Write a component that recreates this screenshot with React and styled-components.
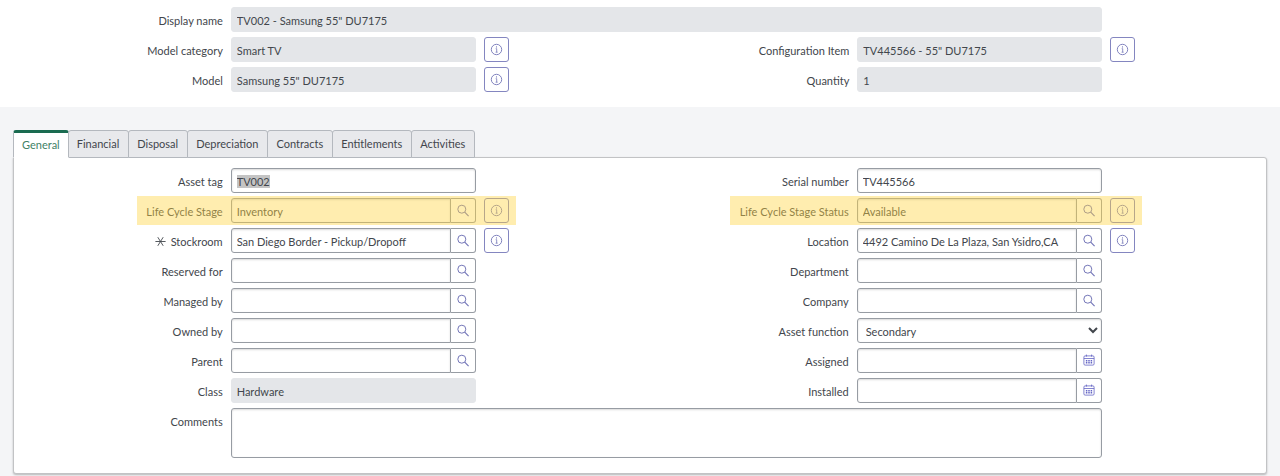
import React, { useEffect, useRef, useState } from "react";
import styled, { createGlobalStyle } from "styled-components";

const GlobalStyle = createGlobalStyle`
  * {
    box-sizing: border-box;
  }

  body {
    margin: 0;
    background: #f4f5f7;
    color: #42464c;
    font-family: Lato, "Open Sans", sans-serif;
    font-size: 11px;
    line-height: 16px;
  }

  button,
  input,
  select,
  textarea {
    margin: 0;
    font: inherit;
    color: inherit;
  }
`;

const Header = styled.header`
  padding: 7px 13px 10px 14px;
  background: #fff;
`;

const Main = styled.main`
  padding: 23px 13px 2px;
`;

const TabList = styled.div`
  display: flex;
`;

const Tab = styled.button`
  height: 28px;
  margin-bottom: -1px;
  margin-right: -1px;
  padding: ${({ $active }) => ($active ? "0 8px" : "0 9px 0 8px")};
  border: 1px solid #b4b8be;
  border-radius: 3px 3px 0 0;
  background: #e8e9ec;
  white-space: nowrap;
  cursor: pointer;
  ${({ $active }) =>
    $active &&
    `
      position: relative;
      border-top: 3px solid #1a6b50;
      border-bottom-color: #fff;
      background: #fff;
      color: #3f8266;
    `};
`;

const Panel = styled.section`
  padding: 10px 0 10px;
  border: 1px solid #c2c3c5;
  border-radius: 0 3px 3px 3px;
  background: #fff;
  box-shadow: 0 1px 2px rgba(0, 0, 0, 0.25);
`;

const Columns = styled.div`
  display: grid;
  grid-template-columns: 1fr 1fr;
`;

const Column = styled.div`
  display: flex;
  flex-direction: column;
`;

const Row = styled.div`
  position: relative;
  display: grid;
  grid-template-columns: ${({ $wide }) => ($wide ? "4fr 17fr 3fr" : "4fr 5fr 3fr")};
  min-height: 25px;
  margin-bottom: 5px;
`;

// translucent marker laid over the whole row
const Marker = styled.span`
  position: absolute;
  top: -2px;
  bottom: -2px;
  left: ${({ $start }) => $start}px;
  right: 124px;
  background: rgba(255, 212, 64, 0.42);
  pointer-events: none;
`;

const Label = styled.label`
  display: flex;
  justify-content: flex-end;
  align-items: center;
  gap: 5px;
  height: 25px;
  padding-top: 2px;
  white-space: nowrap;
`;

const FieldBox = styled.div`
  display: flex;
  min-width: 0;
  padding: 0 8px;
`;

const TextInput = styled.input`
  flex: 1;
  min-width: 0;
  height: 25px;
  padding: 2px 5px 0;
  border: 1px solid #979ca3;
  border-radius: ${({ $addon }) => ($addon ? "3px 0 0 3px" : "3px")};
  outline: none;
  background: #fff;
  box-shadow: inset 0 1px 2px rgba(0, 0, 0, 0.15);

  &::selection {
    background: #c4c4c4;
    color: #42464c;
  }

  &:read-only {
    border-color: #e4e6e9;
    background: #e4e6e9;
    box-shadow: none;
  }
`;

const Select = styled.select`
  flex: 1;
  min-width: 0;
  height: 25px;
  padding: 2px 0 0 4px;
  border: 1px solid #979ca3;
  border-radius: 3px;
  background: #fff;
  box-shadow: inset 0 1px 2px rgba(0, 0, 0, 0.15);
`;

const TextArea = styled.textarea`
  flex: 1;
  height: 50px;
  padding: 4px 5px;
  border: 1px solid #979ca3;
  border-radius: 3px;
  outline: none;
  resize: none;
  box-shadow: inset 0 1px 2px rgba(0, 0, 0, 0.15);
`;

const IconButton = styled.button`
  display: flex;
  align-items: center;
  justify-content: center;
  width: 25px;
  height: 25px;
  padding: 0;
  border: 1px solid #8486c0;
  border-radius: 3px;
  background: #fff;
  color: #7476b8;
  cursor: pointer;
`;

const AddonButton = styled(IconButton)`
  border-color: #979ca3;
  border-left: none;
  border-radius: 0 3px 3px 0;
`;

const InfoIcon = () => (
  <svg width="13" height="13" viewBox="0 0 13 13" fill="none" stroke="currentColor">
    <circle cx="6.5" cy="6.5" r="5.2" strokeWidth="0.9" />
    <path d="M5.7 5.7h1v3.5M5.6 9.2h2" strokeWidth="0.8" />
    <circle cx="6.5" cy="3.9" r="0.6" fill="currentColor" stroke="none" />
  </svg>
);

const SearchIcon = () => (
  <svg width="13" height="13" viewBox="0 0 13 13" fill="none" stroke="currentColor">
    <circle cx="5.8" cy="5.2" r="4" />
    <path d="M8.7 8.1l3.9 4" strokeWidth="1.2" />
  </svg>
);

const CalendarIcon = () => (
  <svg width="13" height="13" viewBox="0 0 13 13" fill="none" stroke="#6465c4">
    <rect x="1.9" y="1.9" width="10.2" height="9.2" rx="1.2" strokeWidth="0.8" />
    <path d="M1.9 4.5h10.2" strokeWidth="0.8" />
    <path d="M4.4 0.6v2M9.6 0.6v2" strokeWidth="0.9" />
    <path d="M4.6 6v3.4M7 6v3.4M9.4 6v3.4" strokeWidth="1.5" strokeDasharray="1.5 0.4" />
  </svg>
);

const RequiredIcon = () => (
  <svg
    width="11"
    height="11"
    viewBox="0 0 11 11"
    fill="none"
    stroke="currentColor"
    role="img"
    aria-label="Required"
  >
    <path d="M0.4 5.5h10.2M2.8 1.2l5.4 8.6M8.2 1.2L2.8 9.8" strokeWidth="0.9" />
  </svg>
);

const tabs = [
  "General",
  "Financial",
  "Disposal",
  "Depreciation",
  "Contracts",
  "Entitlements",
  "Activities",
];

const leftFields = [
  { id: "asset_tag", label: "Asset tag", value: "TV002", selected: true },
  { id: "stage", label: "Life Cycle Stage", value: "Inventory", addon: "search", info: true, marker: 123 },
  {
    id: "stockroom",
    label: "Stockroom",
    value: "San Diego Border - Pickup/Dropoff",
    addon: "search",
    info: true,
    required: true,
  },
  { id: "reserved_for", label: "Reserved for", addon: "search" },
  { id: "managed_by", label: "Managed by", addon: "search" },
  { id: "owned_by", label: "Owned by", addon: "search" },
  { id: "parent", label: "Parent", addon: "search" },
  { id: "class", label: "Class", value: "Hardware", readOnly: true },
];

const rightFields = [
  { id: "serial_number", label: "Serial number", value: "TV445566" },
  {
    id: "stage_status",
    label: "Life Cycle Stage Status",
    value: "Available",
    addon: "search",
    info: true,
    marker: 90,
  },
  {
    id: "location",
    label: "Location",
    value: "4492 Camino De La Plaza, San Ysidro,CA",
    addon: "search",
    info: true,
  },
  { id: "department", label: "Department", addon: "search" },
  { id: "company", label: "Company", addon: "search" },
  { id: "asset_function", label: "Asset function", options: ["Secondary", "Primary"] },
  { id: "assigned", label: "Assigned", addon: "calendar" },
  { id: "installed", label: "Installed", addon: "calendar" },
];

const Field = ({ field, wide }) => {
  const { id, label, value, addon, info, marker, options, readOnly, required, selected } = field;
  const inputRef = useRef(null);

  useEffect(() => {
    if (selected) {
      inputRef.current.focus();
      inputRef.current.select();
    }
  }, [selected]);

  return (
    <Row $wide={wide}>
      <Label htmlFor={id}>
        {required && <RequiredIcon />}
        {label}
      </Label>
      <FieldBox>
        {options ? (
          <Select id={id} defaultValue={options[0]}>
            {options.map((option) => (
              <option key={option}>{option}</option>
            ))}
          </Select>
        ) : (
          <TextInput
            id={id}
            ref={inputRef}
            type='text'
            defaultValue={value}
            readOnly={readOnly}
            $addon={addon}
          />
        )}
        {addon && (
          <AddonButton type='button' aria-label={`Look up ${label}`}>
            {addon === "search" ? <SearchIcon /> : <CalendarIcon />}
          </AddonButton>
        )}
      </FieldBox>
      {info && (
        <IconButton type='button' aria-label={`Preview ${label}`}>
          <InfoIcon />
        </IconButton>
      )}
      {marker && <Marker $start={marker} />}
    </Row>
  );
};

const App = () => {
  const [activeTab, setActiveTab] = useState("General");

  return (
    <>
      <GlobalStyle />
      <Header>
        <Field
          wide
          field={{
            id: "display_name",
            label: "Display name",
            value: 'TV002 - Samsung 55" DU7175',
            readOnly: true,
          }}
        />
        <Columns>
          <Column>
            <Field
              field={{
                id: "model_category",
                label: "Model category",
                value: "Smart TV",
                readOnly: true,
                info: true,
              }}
            />
            <Field
              field={{
                id: "model",
                label: "Model",
                value: 'Samsung 55" DU7175',
                readOnly: true,
                info: true,
              }}
            />
          </Column>
          <Column>
            <Field
              field={{
                id: "configuration_item",
                label: "Configuration Item",
                value: 'TV445566 - 55" DU7175',
                readOnly: true,
                info: true,
              }}
            />
            <Field field={{ id: "quantity", label: "Quantity", value: "1", readOnly: true }} />
          </Column>
        </Columns>
      </Header>
      <Main>
        <TabList role='tablist'>
          {tabs.map((tab) => (
            <Tab
              key={tab}
              type='button'
              role='tab'
              aria-selected={tab === activeTab}
              $active={tab === activeTab}
              onClick={() => setActiveTab(tab)}
            >
              {tab}
            </Tab>
          ))}
        </TabList>
        <Panel role='tabpanel'>
          <Columns>
            <Column>
              {leftFields.map((field) => (
                <Field key={field.id} field={field} />
              ))}
            </Column>
            <Column>
              {rightFields.map((field) => (
                <Field key={field.id} field={field} />
              ))}
            </Column>
          </Columns>
          <Row $wide>
            <Label htmlFor='comments'>Comments</Label>
            <FieldBox>
              <TextArea id='comments' />
            </FieldBox>
          </Row>
        </Panel>
      </Main>
    </>
  );
};

export default App;
